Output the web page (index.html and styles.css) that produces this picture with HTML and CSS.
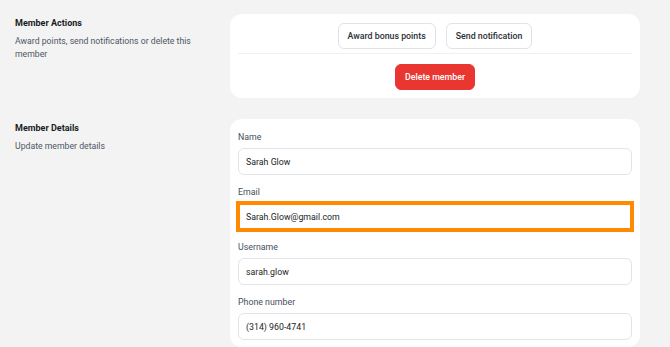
FILE: index.html
```html
<!DOCTYPE html>
<html lang="en">

<head>
    <meta charset="UTF-8">
    <meta name="viewport" content="width=device-width, initial-scale=1.0">
    <title>Member</title>
    <link rel="stylesheet" href="styles.css">
</head>

<body>
    <div class="page">
        <section class="row">
            <div class="side">
                <h4>Member Actions</h4>
                <p>Award points, send notifications or delete this member</p>
            </div>
            <div class="card actions">
                <div class="btn-row">
                    <button class="btn">Award bonus points</button>
                    <button class="btn">Send notification</button>
                </div>
                <div class="danger-row">
                    <button class="btn btn-danger">Delete member</button>
                </div>
            </div>
        </section>

        <section class="row">
            <div class="side">
                <h4>Member Details</h4>
                <p>Update member details</p>
            </div>
            <div class="card form">
                <label class="field">
                    <span>Name</span>
                    <input type="text" value="Sarah Glow">
                </label>
                <label class="field">
                    <span>Email</span>
                    <input type="text" class="highlight" value="Sarah.Glow@gmail.com">
                </label>
                <label class="field">
                    <span>Username</span>
                    <input type="text" value="sarah.glow">
                </label>
                <label class="field">
                    <span>Phone number</span>
                    <input type="text" value="(314) 960-4741">
                </label>
            </div>
        </section>
    </div>
</body>

</html>
```

FILE: styles.css
```css
body {
    margin: 0;
    background: #f3f3f3;
    font-family: Roboto, "Liberation Sans", sans-serif;
    color: #1f2937;
}

.page {
    padding: 14px 30px 0 15px;
    display: flex;
    flex-direction: column;
    gap: 21px;
}

.row {
    display: grid;
    grid-template-columns: 200px 1fr;
    gap: 15px;
}

.side h4 {
    margin: 3px 0 6px;
    font-size: 9px;
    line-height: 12px;
    font-weight: 700;
    color: #1a1d22;
}

.side p {
    margin: 0;
    font-size: 8.7px;
    line-height: 13px;
    color: #4f5764;
}

.card {
    background: #fff;
    border-radius: 12px;
}

/* actions card */
.actions {
    padding: 9px 8px 8px;
}

.btn-row {
    display: flex;
    justify-content: center;
    gap: 10px;
    padding-bottom: 4px;
    border-bottom: 1px solid #eef0f3;
}

.danger-row {
    display: flex;
    justify-content: center;
    padding-top: 10px;
}

.btn {
    height: 26px;
    padding: 0 9px;
    border: 1px solid #dfe2e8;
    border-radius: 6px;
    background: #fff;
    font-family: Roboto, "Liberation Sans", sans-serif;
    font-size: 8.8px;
    font-weight: 500;
    color: #2b2f36;
}

.btn-danger {
    border-color: #ea3631;
    background: #ea3631;
    color: #fff;
    padding: 0 9px;
}

/* details form */
.form {
    padding: 12px 8px 7px;
    display: flex;
    flex-direction: column;
    gap: 11px;
}

.field {
    display: flex;
    flex-direction: column;
    gap: 5px;
}

.field span {
    font-size: 8.8px;
    line-height: 12px;
    color: #474e5b;
}

.field input {
    box-sizing: border-box;
    height: 27px;
    padding: 0 7px;
    border: 1px solid #e2e4e9;
    border-radius: 6px;
    font-family: Roboto, "Liberation Sans", sans-serif;
    font-size: 8.8px;
    color: #1a1e24;
    background: #fff;
}

.field input.highlight {
    border-radius: 0;
    outline: 4px solid #ff8a00;
    outline-offset: -2px;
}
```
